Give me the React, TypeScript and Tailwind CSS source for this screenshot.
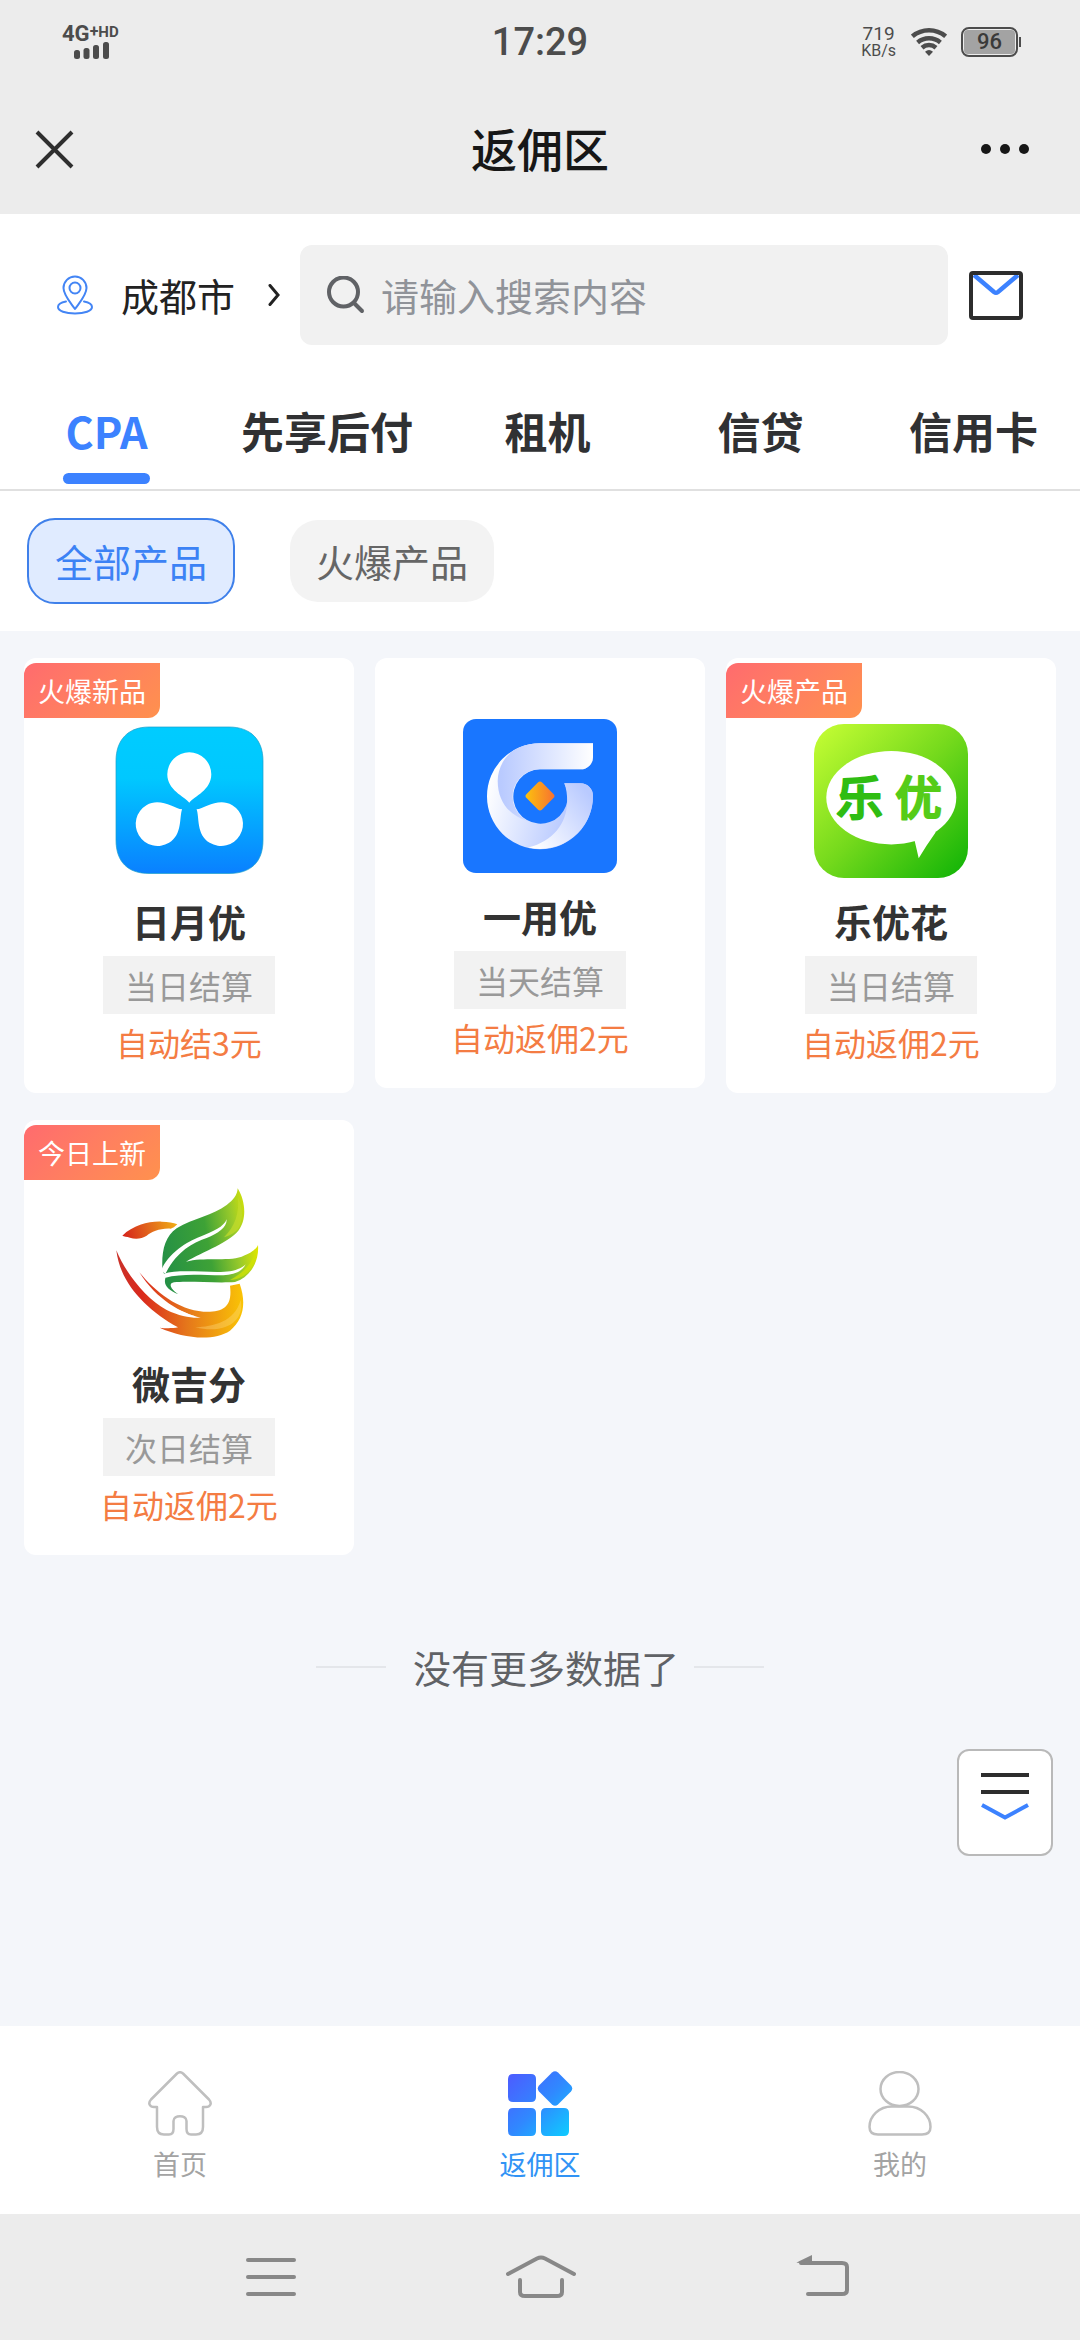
import { useState } from "react";

const cjk = "font-['Noto_Sans_CJK_SC',sans-serif]";

function StatusBar() {
  return (
    <div className="relative flex h-[84px] items-center justify-between pr-[59px] pl-[62px] font-[Roboto,sans-serif] text-[#4c4c4c]">
      <div className="flex flex-col items-center">
        <div className="flex items-start font-bold">
          <span className="text-[22px] leading-4">4G</span>
          <span className="text-[16px] leading-3">+</span>
          <span className="text-[15px] leading-3">HD</span>
        </div>
        <svg className="ml-1" width="36" height="17" viewBox="0 0 36 17" fill="currentColor" aria-hidden="true">
          <rect x="0" y="8" width="6" height="9" rx="2.500" />
          <rect x="9.500" y="6" width="6" height="11" rx="2.500" />
          <rect x="19" y="3" width="6" height="14" rx="2.500" />
          <rect x="29" y="0" width="6" height="17" rx="2.500" />
        </svg>
      </div>
      <time className="absolute left-1/2 -translate-x-1/2 text-[38px] leading-10 font-medium">17:29</time>
      <div className="flex items-center">
        <div className="flex flex-col items-center">
          <span className="text-[19px] leading-[18px]">719</span>
          <span className="text-[16px] leading-4">KB/s</span>
        </div>
        <svg className="ml-[15px]" width="36" height="28" viewBox="0 0 36 28" aria-hidden="true">
          <g fill="none" stroke="currentColor" strokeWidth="4.500">
            <path d="M1.400 8.300A25.800 25.800 0 0 1 34.600 8.300" />
            <path d="M6.600 14.400A17.800 17.800 0 0 1 29.400 14.400" />
            <path d="M11 19.700A10.800 10.800 0 0 1 25 19.700" />
          </g>
          <path d="M18 28L14 23.700Q18 20.500 22 23.700Z" fill="currentColor" />
        </svg>
        <div className="ml-[14px] flex h-[30px] w-[57px] items-center rounded-lg border-2 border-[#4c4c4c] p-px">
          <div className="flex h-full w-full items-center justify-center rounded-[4px] bg-[#a3a3a3] text-[22px] leading-6 font-medium text-[#3a3a3a]">
            96
          </div>
        </div>
        <div className="ml-px h-[10px] w-[2px] bg-[#4c4c4c]" />
      </div>
    </div>
  );
}

function TitleBar() {
  return (
    <div className="flex h-[130px] items-center justify-between pr-[50px] pl-[35px]">
      <button type="button" aria-label="关闭" className="w-[65px]">
        <svg width="39" height="39" viewBox="0 0 39 39" fill="none" stroke="#2e2e2e" strokeWidth="4">
          <path d="M2 2L37 37M37 2L2 37" />
        </svg>
      </button>
      <h1 className="pb-1 text-[46px] leading-[60px] font-medium text-[#171717]">返佣区</h1>
      <button type="button" aria-label="更多">
        <svg width="50" height="12" viewBox="0 0 50 12" fill="#171717">
          <circle cx="6" cy="6" r="5" />
          <circle cx="25" cy="6" r="5" />
          <circle cx="44" cy="6" r="5" />
        </svg>
      </button>
    </div>
  );
}

function SearchRow() {
  return (
    <div className="flex items-center bg-white px-[57px] pt-[31px]">
      <button type="button" className="flex shrink-0 items-center">
        <svg width="36" height="40" viewBox="0 0 36 40" fill="none" stroke="#4385f5" strokeWidth="2" aria-hidden="true">
          <path d="M18 34C13 27 6.500 20 6.500 13A11.500 11.500 0 0 1 29.500 13C29.500 20 23 27 18 34Z" strokeLinejoin="round" />
          <circle cx="18" cy="13" r="5.500" />
          <path d="M9 26.500C4 27.500 1 29.500 1 32C1 36 8.500 38.500 18 38.500S35 36 35 32C35 29.500 32 27.500 27 26.500" strokeLinecap="round" />
        </svg>
        <span className="ml-7 text-[38px] leading-[50px] text-[#222]">成都市</span>
        <svg className="ml-[33px]" width="12" height="22" viewBox="0 0 12 22" fill="none" stroke="#222" strokeWidth="3" aria-hidden="true">
          <path d="M2 1.500L10 11L2 20.500" strokeLinecap="round" />
        </svg>
      </button>
      <label className="ml-5 flex h-[100px] min-w-0 flex-1 items-center rounded-xl bg-[#f1f1f1] pl-[27px]">
        <svg className="shrink-0" width="38" height="39" viewBox="0 0 38 39" fill="none" stroke="#606266" strokeWidth="4" strokeLinecap="round" aria-hidden="true">
          <circle cx="16.500" cy="16" r="14.500" />
          <path d="M27 27L35 35" />
        </svg>
        <input
          type="search"
          aria-label="搜索"
          placeholder="请输入搜索内容"
          className="ml-4 h-[56px] w-full min-w-0 bg-transparent text-[38px] leading-[56px] text-[#303133] outline-none placeholder:text-[#909399]"
        />
      </label>
      <button type="button" aria-label="消息" className="ml-[21px] shrink-0">
        <svg width="54" height="49" viewBox="0 0 54 49" fill="none">
          <path d="M5 4L25 21Q27 22.500 29 21L49 4" stroke="#3c82ff" strokeWidth="4.500" />
          <rect x="2" y="2" width="50" height="45" rx="2" stroke="#2d2d2d" strokeWidth="4" />
        </svg>
      </button>
    </div>
  );
}

const tabs = ["CPA", "先享后付", "租机", "信贷", "信用卡"];

function Tabs() {
  const [active, setActive] = useState("CPA");
  return (
    <div role="tablist" className="flex border-b-2 border-[#e0e0e0] bg-white pt-[55px] pb-[5px]">
      {tabs.map((tab) => (
        <button
          key={tab}
          type="button"
          role="tab"
          aria-selected={tab === active}
          onClick={() => setActive(tab)}
          className="flex flex-1 flex-col items-center"
        >
          <span
            className={
              tab === active
                ? "px-7 text-[43px] leading-[60px] font-bold whitespace-nowrap text-[#3c82ff]"
                : "px-7 text-[43px] leading-[60px] font-bold whitespace-nowrap text-[#303133]"
            }
          >
            {tab}
          </span>
          <span className={tab === active ? "mt-[13px] h-[11px] w-[87px] rounded-full bg-[#3c82ff]" : "mt-[13px] h-[11px]"} />
        </button>
      ))}
    </div>
  );
}

function Filters() {
  const [active, setActive] = useState("全部产品");
  return (
    <div className="flex items-center gap-[55px] bg-white p-[27px]">
      {["全部产品", "火爆产品"].map((name) => (
        <button
          key={name}
          type="button"
          onClick={() => setActive(name)}
          className={
            name === active
              ? "rounded-[28px] border-2 border-[#3f80ea] bg-[#e0ebff] px-[26px] py-[11px] text-[38px] leading-[60px] text-[#3c82f5]"
              : "rounded-[28px] bg-[#f3f3f3] px-[26px] py-[11px] text-[38px] leading-[60px] text-[#666]"
          }
        >
          {name}
        </button>
      ))}
    </div>
  );
}

function PetalLogo() {
  const drop = "M0 28.500C-5 22-22 16-22 0A22 22 0 0 1 22 0C22 16 5 22 0 28.500Z";
  return (
    <svg width="154" height="154" viewBox="0 0 154 154" aria-hidden="true">
      <defs>
        <linearGradient id="petalBg" x1="0" y1="0" x2="0" y2="1">
          <stop offset="0" stopColor="#00ccff" />
          <stop offset="0.350" stopColor="#00c8ff" />
          <stop offset="1" stopColor="#0a80ff" />
        </linearGradient>
      </defs>
      <path
        d="M37 3H117C139 3 151 16 151 37V116C151 138 139 149.500 117 149.500H37C16 149.500 4 138 4 116V37C4 16 16 3 37 3Z"
        fill="url(#petalBg)"
        stroke="#1b9fc8"
        strokeWidth="0.700"
      />
      <g fill="#fff">
        <path d={drop} transform="translate(77.300 50.300)" />
        <path d={drop} transform="translate(45.700 100) rotate(-121)" />
        <path d={drop} transform="translate(109 100) rotate(121)" />
      </g>
    </svg>
  );
}

function RingLogo() {
  return (
    <svg width="154" height="154" viewBox="0 0 154 154" aria-hidden="true">
      <defs>
        <linearGradient id="ringBase" gradientUnits="userSpaceOnUse" x1="24" y1="70" x2="105" y2="90">
          <stop offset="0" stopColor="#fff" />
          <stop offset="1" stopColor="#b9caff" />
        </linearGradient>
        <linearGradient id="ringTop" gradientUnits="userSpaceOnUse" x1="38" y1="0" x2="130" y2="0">
          <stop offset="0" stopColor="#b9caff" />
          <stop offset="1" stopColor="#fff" />
        </linearGradient>
        <linearGradient id="ringEnd" gradientUnits="userSpaceOnUse" x1="70" y1="128" x2="130" y2="80">
          <stop offset="0" stopColor="#fff" />
          <stop offset="1" stopColor="#b9caff" />
        </linearGradient>
        <linearGradient id="ringGem" x1="0" y1="1" x2="1" y2="0">
          <stop offset="0" stopColor="#fcc40c" />
          <stop offset="1" stopColor="#f76f32" />
        </linearGradient>
      </defs>
      <rect width="154" height="154" rx="13" fill="#1976ff" />
      <path
        d="M77 24.300H130V38A12.300 12.300 0 0 1 117.700 50.300H77A27.200 27.200 0 1 0 101.300 64.300H117.500A12.500 12.500 0 0 1 130 77A53 53 0 1 1 77 24.300Z"
        fill="url(#ringBase)"
      />
      <path
        d="M77 24.300H130V38A12.300 12.300 0 0 1 117.700 50.300H77A27.200 27.200 0 0 0 65 102C46 97 34.700 82 34.700 62C34.700 48 43 34 56 28.500C63 25.500 70 24.300 77 24.300Z"
        fill="url(#ringTop)"
      />
      <path
        d="M101.300 64.300H117.500A12.500 12.500 0 0 1 130 77A53 53 0 0 1 65.300 128.600C90 122 104 105 104.200 82C104.200 76 103.500 70 101.300 64.300Z"
        fill="url(#ringEnd)"
      />
      <rect x="66" y="66" width="22" height="22" rx="3" transform="rotate(45 77 77)" fill="url(#ringGem)" />
    </svg>
  );
}

function BubbleLogo() {
  return (
    <svg width="154" height="154" viewBox="0 0 154 154" aria-hidden="true">
      <defs>
        <linearGradient id="bubbleBg" x1="0.050" y1="0.050" x2="0.950" y2="0.950">
          <stop offset="0" stopColor="#c0fb32" />
          <stop offset="0.500" stopColor="#74d91c" />
          <stop offset="1" stopColor="#17b608" />
        </linearGradient>
      </defs>
      <rect width="154" height="154" rx="30" fill="url(#bubbleBg)" />
      <ellipse cx="77.300" cy="73.700" rx="65" ry="46.700" fill="#fff" />
      <path d="M100.700 117L104.700 134.300Q112 122 121.700 108.300L110 104Z" fill="#fff" />
      <g className="font-['Noto_Sans_CJK_SC',sans-serif] font-medium" fontSize="47" strokeWidth="2" strokeLinejoin="round">
        <text x="22" y="91" fill="#2fbd12" stroke="#2fbd12">乐</text>
        <text x="81" y="91" fill="#55cc18" stroke="#55cc18">优</text>
      </g>
    </svg>
  );
}

function PhoenixLogo() {
  return (
    <svg width="154" height="154" viewBox="336 228 462 462" aria-hidden="true">
      <defs>
        <linearGradient id="phHead" gradientUnits="userSpaceOnUse" x1="370" y1="385" x2="530" y2="340">
          <stop offset="0" stopColor="#d5231b" />
          <stop offset="0.500" stopColor="#e2671c" />
          <stop offset="1" stopColor="#f0ad14" />
        </linearGradient>
        <linearGradient id="phWing" gradientUnits="userSpaceOnUse" x1="487" y1="450" x2="770" y2="400">
          <stop offset="0" stopColor="#249045" />
          <stop offset="0.500" stopColor="#3ea236" />
          <stop offset="0.800" stopColor="#9bcb2a" />
          <stop offset="1" stopColor="#dfe600" />
        </linearGradient>
        <linearGradient id="phBody" gradientUnits="userSpaceOnUse" x1="350" y1="0" x2="730" y2="0">
          <stop offset="0" stopColor="#c9322a" />
          <stop offset="0.200" stopColor="#da291c" />
          <stop offset="0.550" stopColor="#e5761b" />
          <stop offset="1" stopColor="#fac405" />
        </linearGradient>
      </defs>
      <path
        d="M367 377C400 345 450 333 485 335C505 335 520 338 532 343C525 350 518 355 512 356C480 354 455 366 440 377C425 387 405 388 390 383C380 380 372 379 367 377Z"
        fill="url(#phHead)"
      />
      <path
        d="M713 235C738 275 740 330 715 362C690 395 610 425 558 455C610 440 680 455 725 440C755 430 770 415 774 405C778 450 755 500 705 516C650 520 560 512 522 517C505 520 510 535 535 553C505 540 490 525 496 505L487 475C485 420 495 380 530 355C580 325 640 315 680 285C700 270 712 255 713 235Z"
        fill="url(#phWing)"
      />
      <path d="M714 262C718 310 705 350 672 382C700 372 712 362 718 350C732 320 726 290 714 262Z" fill="#c3dc2c" opacity="0.700" />
      <path d="M768 425C750 465 735 485 690 510C735 508 765 475 768 425Z" fill="#d4e400" opacity="0.700" />
      <path d="M484 480C505 430 560 395 600 380C640 365 672 350 680 328C681 352 655 370 620 384C575 400 530 425 496 492Z" fill="#fff" />
      <path d="M490 492C540 475 640 492 690 484C715 480 730 470 737 463C725 487 700 494 670 496C620 497 550 488 494 504Z" fill="#fff" />
      <path
        d="M349 421C375 485 435 565 500 600C540 619 575 625 602 623C545 610 470 570 418 487C465 545 535 600 610 605C670 608 698 590 690 527L719 521C740 580 730 630 690 662C640 695 550 685 479 653C500 656 520 655 534 652C440 600 360 520 349 421Z"
        fill="url(#phBody)"
      />
      <path d="M418 498C450 550 500 590 585 619C530 612 480 585 440 545Z" fill="#fff" opacity="0.900" />
      <path d="M585 652C640 650 705 635 722 570C735 630 680 675 585 652Z" fill="#ffe08a" opacity="0.350" />
    </svg>
  );
}

const products = [
  { name: "日月优", badge: "火爆新品", settle: "当日结算", reward: "自动结3元", Logo: PetalLogo },
  { name: "一用优", badge: "", settle: "当天结算", reward: "自动返佣2元", Logo: RingLogo },
  { name: "乐优花", badge: "火爆产品", settle: "当日结算", reward: "自动返佣2元", Logo: BubbleLogo },
  { name: "微吉分", badge: "今日上新", settle: "次日结算", reward: "自动返佣2元", Logo: PhoenixLogo },
];

function ProductCard({ name, badge, settle, reward, Logo }: (typeof products)[number]) {
  return (
    <article className={badge ? "flex flex-col items-center rounded-xl bg-white pt-[5px] pb-[27px]" : "flex flex-col items-center rounded-xl bg-white pt-[61px] pb-[27px]"}>
      {badge && (
        <span className="mb-[6px] self-start rounded-tl-xl rounded-br-xl bg-linear-135 from-[#ff6b6e] to-[#ff914d] px-[14px] text-[27px] leading-[55px] text-white">
          {badge}
        </span>
      )}
      <Logo />
      <h2 className="mt-4 text-[38px] leading-[54px] font-bold text-[#333]">{name}</h2>
      <p className="mt-2 bg-[#f2f2f2] px-[22px] text-[32px] leading-[58px] text-[#999]">{settle}</p>
      <p className="mt-1 text-[32px] leading-[48px] text-[#f47c43]">{reward}</p>
    </article>
  );
}

function BottomNav() {
  return (
    <nav className="grid grid-cols-3 bg-white pt-[45px] pb-[31px] text-[27px] leading-[39px] text-[#a3a3a3]">
      <a href="#home" className="flex flex-col items-center gap-2">
        <svg width="64" height="65" viewBox="0 0 64 65" fill="none" stroke="#bfbfbf" strokeWidth="2.500" strokeLinejoin="round" aria-hidden="true">
          <path d="M29 2.500Q32 0 35 2.500L61 28.500C64.500 32.500 62 36 58 36H55V56C55 61 52.500 63.500 48 63.500H43C40 63.500 38.500 61 38.500 58V50C38.500 43.500 25.500 43.500 25.500 50V58C25.500 61 24 63.500 21 63.500H16C11.500 63.500 9 61 9 56V36H6C2 36-0.500 32.500 3 28.500Z" />
        </svg>
        首页
      </a>
      <a href="#rebate" aria-current="page" className="flex flex-col items-center gap-2 text-[#3193f5]">
        <svg width="65" height="65" viewBox="0 0 65 65" fill="url(#navApps)" aria-hidden="true">
          <defs>
            <linearGradient id="navApps" gradientUnits="userSpaceOnUse" x1="4" y1="6" x2="60" y2="62">
              <stop offset="0" stopColor="#4a60ff" />
              <stop offset="0.500" stopColor="#3088ff" />
              <stop offset="1" stopColor="#10c8ff" />
            </linearGradient>
          </defs>
          <path d="M5 3H23Q28 3 28 8V26Q28 31 23 31H5Q0 31 0 26V8Q0 3 5 3Z" />
          <path d="M5 37H23Q28 37 28 42V60Q28 65 23 65H5Q0 65 0 60V42Q0 37 5 37Z" />
          <path d="M38 37H56Q61 37 61 42V60Q61 65 56 65H38Q33 65 33 60V42Q33 37 38 37Z" />
          <path d="M44 1.500Q47 -1 50 1.500L63 14.500Q65.500 17.500 63 20.500L50 33.500Q47 36 44 33.500L31 20.500Q28.500 17.500 31 14.500Z" />
        </svg>
        返佣区
      </a>
      <a href="#mine" className="flex flex-col items-center gap-2">
        <svg width="64" height="65" viewBox="0 0 64 65" fill="none" stroke="#bfbfbf" strokeWidth="2.500" aria-hidden="true">
          <ellipse cx="31.500" cy="18" rx="19" ry="17" />
          <path d="M24 35.500H40C53 35.500 62.500 45 62.500 56C62.500 61.500 59.500 63.500 54 63.500H10C4.500 63.500 1.500 61.500 1.500 56C1.500 45 11 35.500 24 35.500Z" />
        </svg>
        我的
      </a>
    </nav>
  );
}

function SystemNav() {
  return (
    <div className="flex h-[126px] items-center justify-between bg-[#ececec] px-[227px]">
      <button type="button" aria-label="最近任务">
        <svg width="80" height="46" viewBox="0 0 80 46" fill="none" stroke="#888" strokeWidth="4" strokeLinecap="round">
          <path d="M21 6H67M21 23H67M21 40H67" />
        </svg>
      </button>
      <button type="button" aria-label="主屏幕">
        <svg width="80" height="46" viewBox="0 0 80 46" fill="none" stroke="#888" strokeWidth="4" strokeLinecap="round">
          <path d="M8 20L37 4.500Q41 2.500 45 4.500L74 20" />
          <path d="M20 26V38Q20 42 25 42H57Q62 42 62 38V26" />
        </svg>
      </button>
      <button type="button" aria-label="返回">
        <svg width="80" height="46" viewBox="0 0 80 46" fill="none" stroke="#888" strokeWidth="4" strokeLinecap="round">
          <path d="M28 9H69Q74 9 74 13V36Q74 40 69 40H35" />
          <path d="M27 8L38 2.500V9Z" fill="#888" strokeWidth="2" />
        </svg>
      </button>
    </div>
  );
}

export default function App() {
  return (
    <div className={`${cjk} flex min-h-screen flex-col bg-[#f4f6fa]`}>
      <header className="bg-[#ececec]">
        <StatusBar />
        <TitleBar />
      </header>
      <SearchRow />
      <Tabs />
      <Filters />
      <main className="relative flex-1">
        <section className="grid grid-cols-3 items-start gap-x-[21px] gap-y-[27px] px-6 pt-[27px]">
          {products.map((p) => (
            <ProductCard key={p.name} {...p} />
          ))}
        </section>
        <div className="mt-[85px] flex items-center justify-center">
          <span className="h-[2px] w-[70px] bg-[#e4e6ea]" />
          <p className="pr-[15px] pl-[27px] text-[38px] leading-[54px] text-[#606266]">没有更多数据了</p>
          <span className="h-[2px] w-[70px] bg-[#e4e6ea]" />
        </div>
        <button
          type="button"
          aria-label="展开列表"
          className="absolute right-[27px] bottom-[170px] flex h-[107px] w-24 justify-center rounded-xl border-2 border-[#b9b9b9] bg-white pt-[21px]"
        >
          <svg width="48" height="50" viewBox="0 0 48 50" fill="none" strokeWidth="4">
            <path d="M0 3H48M0 20H48" stroke="#2d2d2d" />
            <path d="M1 33L24 45.500L47 33" stroke="#3c82ff" />
          </svg>
        </button>
      </main>
      <BottomNav />
      <SystemNav />
    </div>
  );
}
